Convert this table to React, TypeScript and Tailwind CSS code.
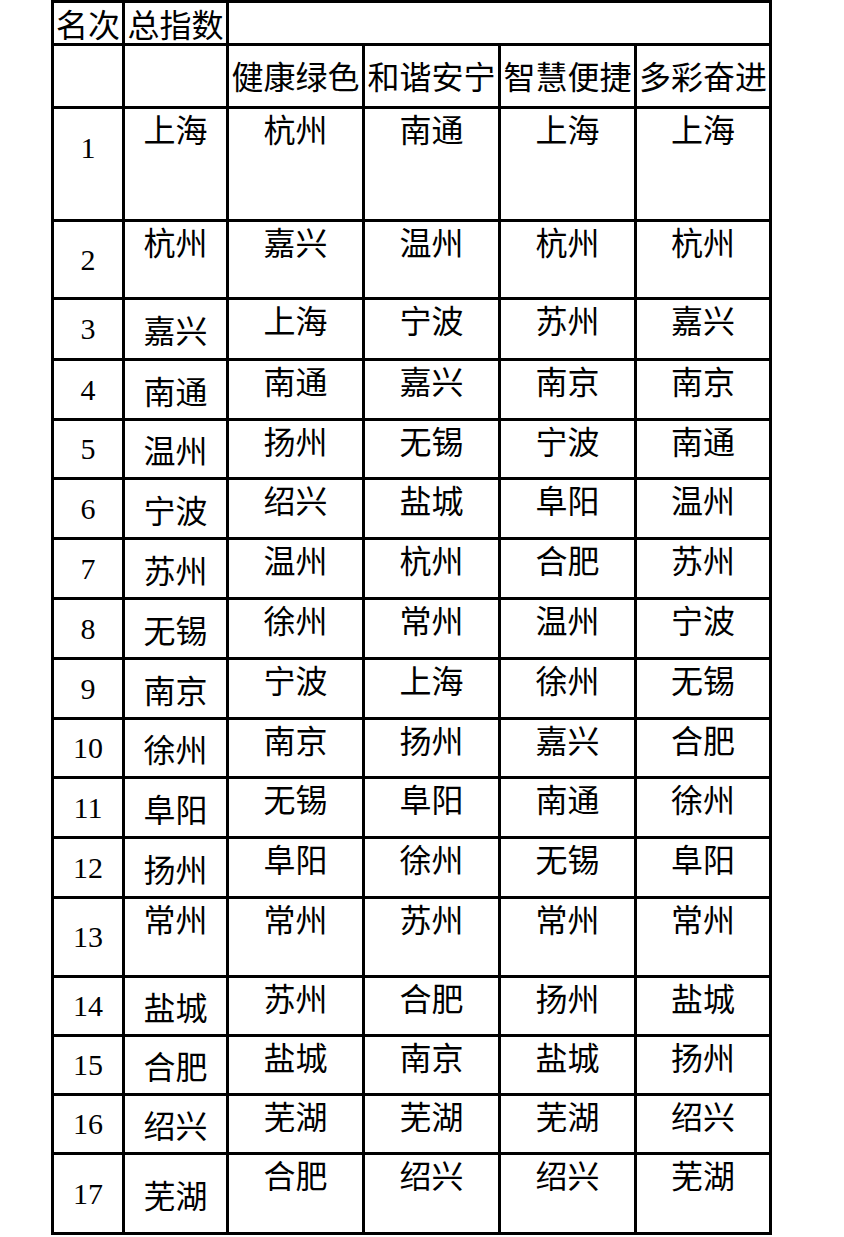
import React from 'react';

// 名次 / 总指数 / 分项指数
const rows: [number, string, string, string, string, string][] = [
  [1, '上海', '杭州', '南通', '上海', '上海'],
  [2, '杭州', '嘉兴', '温州', '杭州', '杭州'],
  [3, '嘉兴', '上海', '宁波', '苏州', '嘉兴'],
  [4, '南通', '南通', '嘉兴', '南京', '南京'],
  [5, '温州', '扬州', '无锡', '宁波', '南通'],
  [6, '宁波', '绍兴', '盐城', '阜阳', '温州'],
  [7, '苏州', '温州', '杭州', '合肥', '苏州'],
  [8, '无锡', '徐州', '常州', '温州', '宁波'],
  [9, '南京', '宁波', '上海', '徐州', '无锡'],
  [10, '徐州', '南京', '扬州', '嘉兴', '合肥'],
  [11, '阜阳', '无锡', '阜阳', '南通', '徐州'],
  [12, '扬州', '阜阳', '徐州', '无锡', '阜阳'],
  [13, '常州', '常州', '苏州', '常州', '常州'],
  [14, '盐城', '苏州', '合肥', '扬州', '盐城'],
  [15, '合肥', '盐城', '南京', '盐城', '扬州'],
  [16, '绍兴', '芜湖', '芜湖', '芜湖', '绍兴'],
  [17, '芜湖', '合肥', '绍兴', '绍兴', '芜湖'],
];

const headers = ['健康绿色', '和谐安宁', '智慧便捷', '多彩奋进'];

// rows where the 总指数 city sits at the top of the cell
const topAligned = [1, 2, 13];

const cjk = "font-['Noto_Sans_CJK_SC','Noto_Sans',sans-serif]";

export default function App() {
  return (
    <div className="min-h-screen bg-white text-black">
      <div
        className={`ml-[51px] w-fit grid grid-cols-[68px_101px_133px_133px_133px_132px] grid-rows-[40px_60px_110px_75px_58px_57px_56px_57px_57px_57px_57px_56px_57px_57px_76px_56px_56px_56px_77px] gap-[3px] bg-black p-[3px] text-[32px] leading-none ${cjk}`}
      >
        {/* header row 1 */}
        <div className="bg-white flex items-center justify-center whitespace-nowrap">名次</div>
        <div className="bg-white flex items-center justify-center whitespace-nowrap">总指数</div>
        <div className="bg-white col-span-4" />

        {/* header row 2 */}
        <div className="bg-white" />
        <div className="bg-white" />
        {headers.map((h) => (
          <div key={h} className="bg-white flex items-center justify-center pb-[2px] whitespace-nowrap">
            {h}
          </div>
        ))}

        {rows.map(([rank, total, ...rest]) => (
          <React.Fragment key={rank}>
            <div
              className={`bg-white flex justify-center font-['Liberation_Serif',serif] text-[30px] ${
                rank === 1 ? 'items-start pt-[24px]' : 'items-center'
              }`}
            >
              {rank}
            </div>
            <div
              className={`bg-white flex justify-center whitespace-nowrap ${
                topAligned.includes(rank) ? 'items-start pt-[3px]' : 'items-center'
              }`}
            >
              {total}
            </div>
            {rest.map((city, i) => (
              <div key={i} className="bg-white flex items-start justify-center pt-[3px] whitespace-nowrap">
                {city}
              </div>
            ))}
          </React.Fragment>
        ))}
      </div>
    </div>
  );
}
